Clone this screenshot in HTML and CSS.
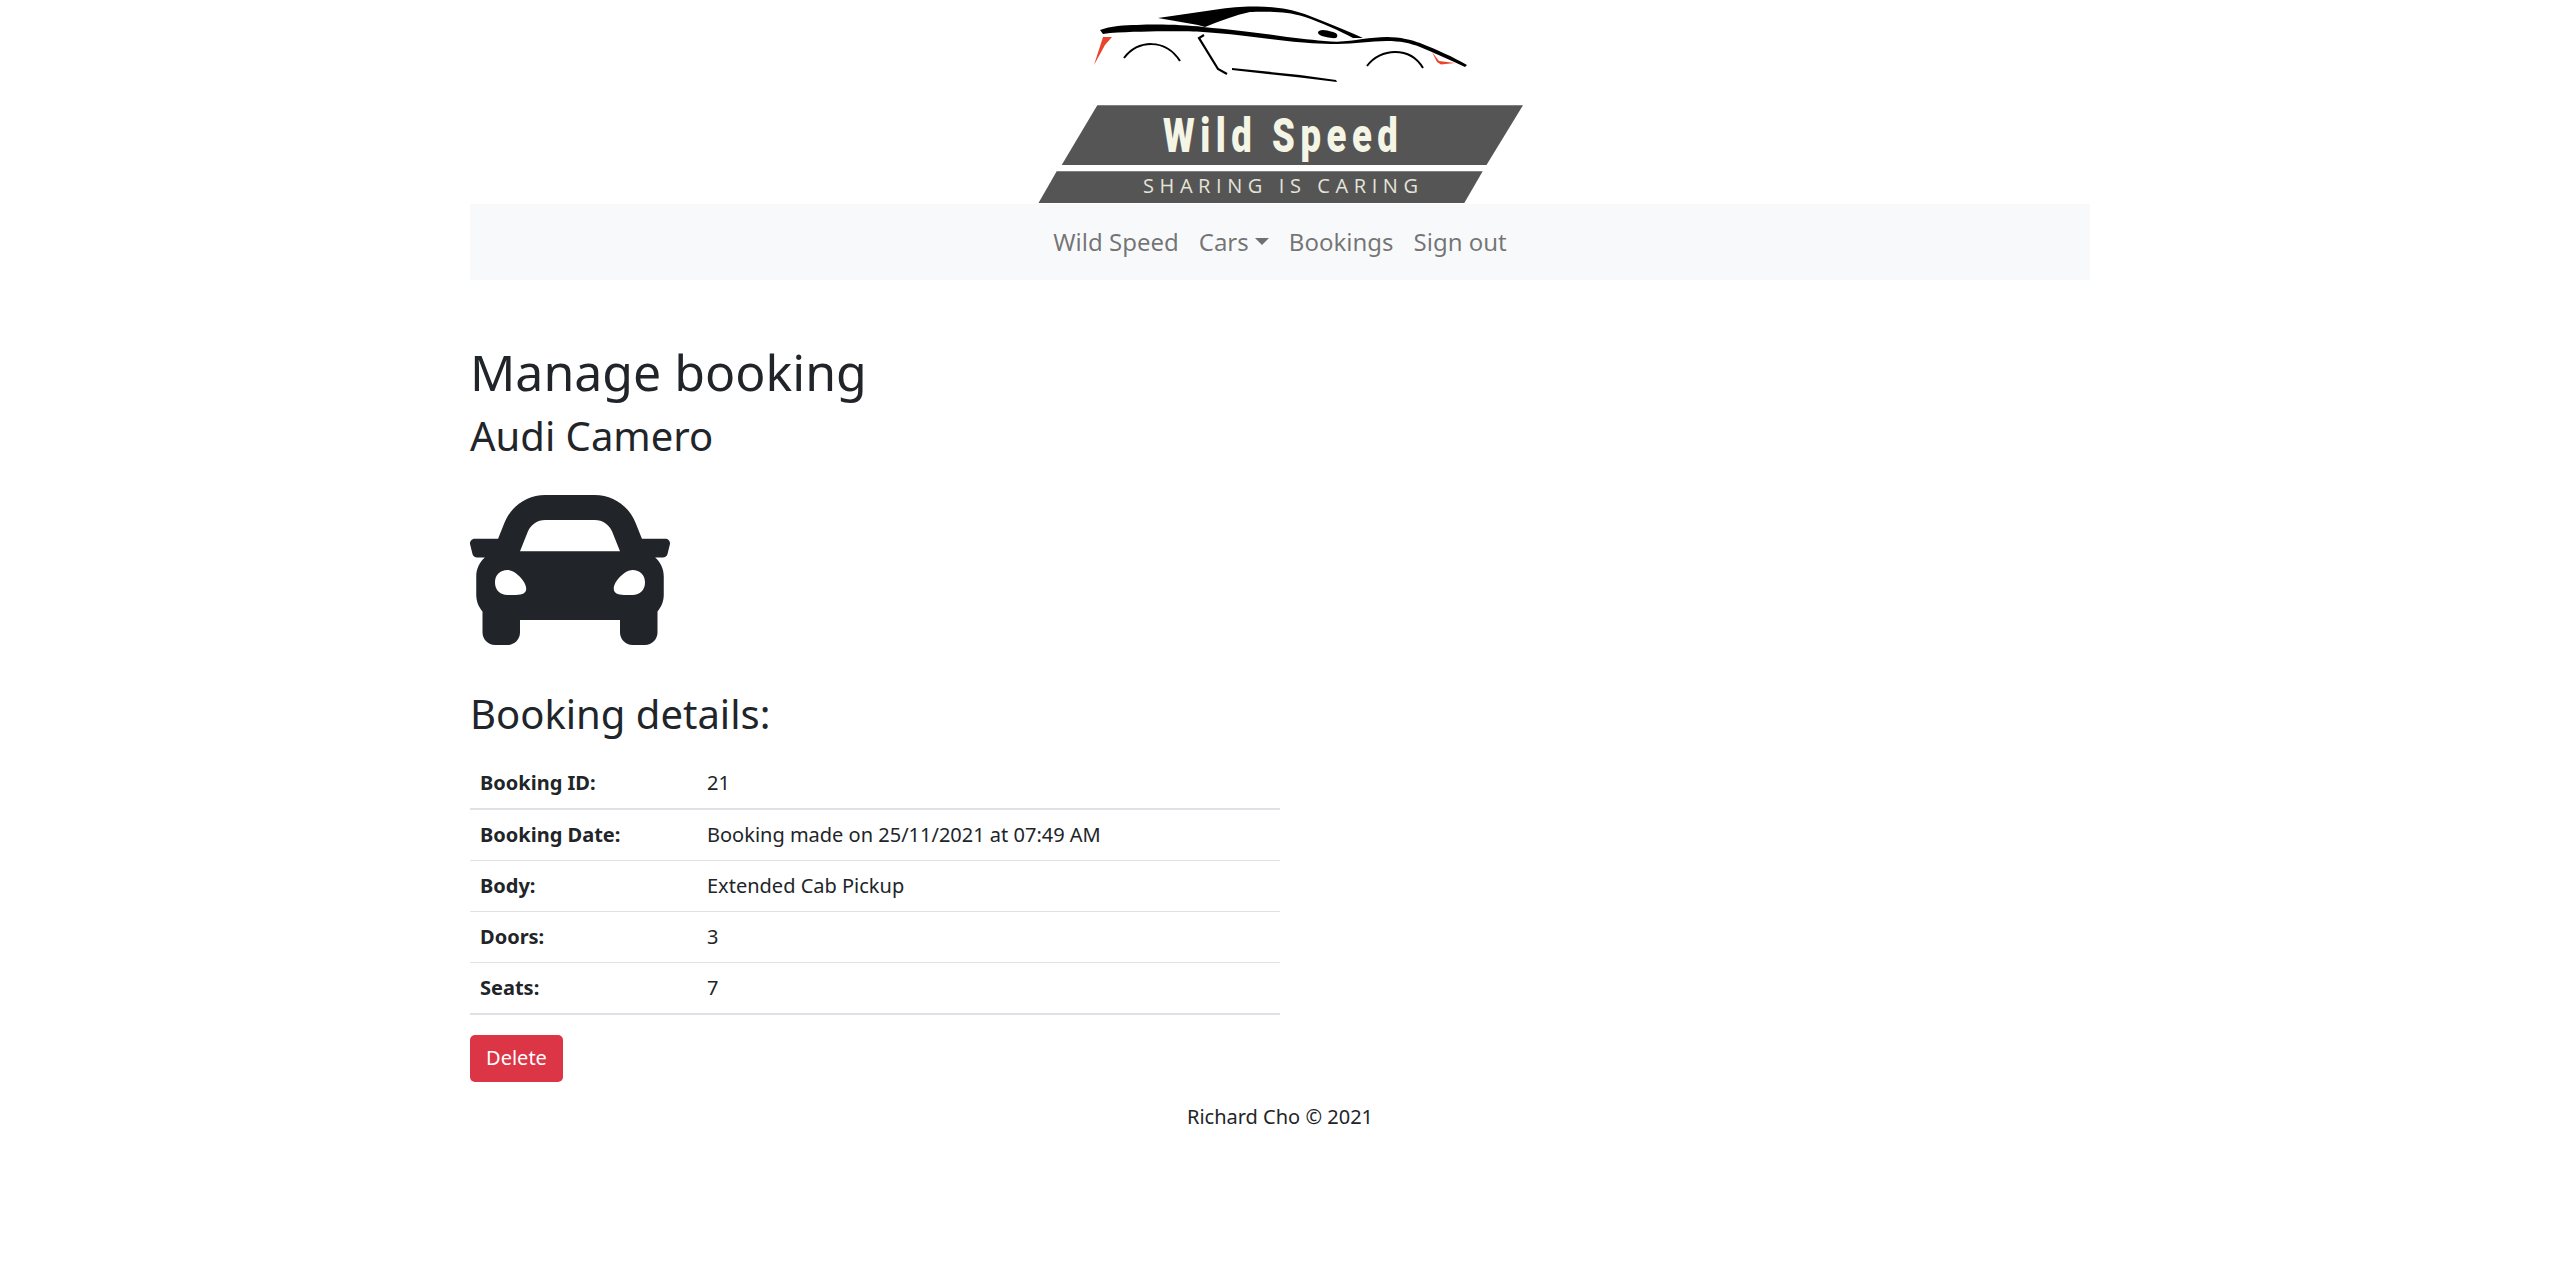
FILE: index.html
```html
<!DOCTYPE html>
<html lang="en">
<head>
  <meta charset="UTF-8">
  <title>Manage booking</title>
  <link rel="stylesheet" href="styles.css">
</head>
<body>
  <header class="logo-wrap">
    <svg class="logo" viewBox="0 0 520 204" width="520" height="204">
      <!-- car outline -->
      <path fill="#000" d="M80 30C90 26 105 25 117 25C140 24 165 25 183 27C215 30 240 33 267 37C285 39 300 41 317 41.7C335 41 350 37 367 37C380 37 392 40 400 43C418 50 433 57 447 65L445 67C430 60 415 53 400 47C390 43 380 41 367 41C350 41 335 44 317 44C300 44 285 43 267 41C240 38 215 34 183 32C165 31 125 31 90 33L83 34Z"/>
      <path fill="#000" d="M138 18L200 9C215 7 225 6.500 237 6.500C247 6.500 258 7.500 267 9.300C280 12 290 16 300 20C315 26 330 32 343 38L333 38C320 31 300 22 285 17C278 15 272 13.500 267 13C255 11.500 240 11.500 230 12C215 15 200 21 185 27L178 25Z"/>
      <path fill="#000" d="M299 31C302 29 306 30 313 32C317 33 318 35 317 37C316 39 311 38 306 37C300 36 296 33 299 31Z"/>
      <path fill="#e8452c" d="M74 65L83 37L92 37L85 45Z"/>
      <path fill="#e8452c" d="M412 52L419 61L435 63L421 64.500L417 62Z"/>
      <path fill="none" stroke="#000" stroke-width="2" d="M104 58C118 40 145 38 160 61"/>
      <path fill="none" stroke="#000" stroke-width="2" d="M347 66C360 48 390 46 403 68"/>
      <path fill="none" stroke="#000" stroke-width="2.200" d="M184 35L179 38L198 69L207 74"/>
      <path fill="#000" d="M212 68L280 75L316 80L317 82L280 77.500L212 70Z"/>
      <!-- banner -->
      <path fill="#555" d="M77.300 105.300H503L466.500 165H41.700Z"/>
      <path fill="#555" d="M36.700 171.300H462.700L444.300 203H18.500Z"/>
      <g transform="translate(143 152) scale(.76 1)">
        <text class="logo-title" textLength="309" lengthAdjust="spacing">Wild Speed</text>
      </g>
      <text class="logo-tag" x="123" y="193" textLength="275">SHARING IS CARING</text>
    </svg>
  </header>

  <div class="container">
    <nav class="navbar">
      <a href="#">Wild Speed</a>
      <a href="#" class="dropdown">Cars</a>
      <a href="#">Bookings</a>
      <a href="#">Sign out</a>
    </nav>

    <main class="content">
      <h1>Manage booking</h1>
      <h2>Audi Camero</h2>
      <svg class="car-icon" viewBox="0 0 512 512" width="200" height="200">
        <path d="M499.99 176h-59.87l-16.64-41.6C406.38 91.63 365.57 64 319.5 64h-127c-46.06 0-86.88 27.63-103.99 70.4L71.87 176H12.01C4.2 176-1.53 183.34.37 190.91l6 24C7.7 220.25 12.5 224 18.01 224h20.07C24.65 235.73 16 252.78 16 272v48c0 16.12 6.16 30.67 16 41.93V416c0 17.67 14.33 32 32 32h32c17.67 0 32-14.33 32-32v-32h256v32c0 17.67 14.33 32 32 32h32c17.67 0 32-14.33 32-32v-54.07c9.84-11.25 16-25.8 16-41.93v-48c0-19.22-8.65-36.27-22.07-48H494c5.51 0 10.31-3.75 11.64-9.09l6-24c1.89-7.57-3.84-14.91-11.65-14.91zm-352.06-17.83c7.29-18.22 24.94-30.17 44.57-30.17h127c19.63 0 37.28 11.95 44.57 30.17L384 208H128l19.93-49.83zM96 319.8c-19.2 0-32-12.76-32-31.9S76.8 256 96 256s48 28.71 48 47.85-28.8 15.95-48 15.95zm320 0c-19.2 0-48 3.19-48-15.95S396.8 256 416 256s32 12.76 32 31.9-12.8 31.9-32 31.9z"/>
      </svg>
      <h2 class="details-title">Booking details:</h2>
      <table class="details">
        <tr><th>Booking ID:</th><td>21</td></tr>
        <tr><th>Booking Date:</th><td>Booking made on 25/11/2021 at 07:49 AM</td></tr>
        <tr><th>Body:</th><td>Extended Cab Pickup</td></tr>
        <tr><th>Doors:</th><td>3</td></tr>
        <tr><th>Seats:</th><td>7</td></tr>
      </table>
      <button class="btn-delete">Delete</button>
    </main>

    <footer class="footer">Richard Cho © 2021</footer>
  </div>
</body>
</html>
```

FILE: styles.css
```css
* {
  box-sizing: border-box;
}

body {
  margin: 0;
  font-family: "Noto Sans", sans-serif;
  font-size: 20px;
  line-height: 30px;
  color: #212529;
  background-color: #fff;
}

.logo-wrap {
  height: 204px;
}

.logo {
  display: block;
  margin: 0 auto;
}

.logo-title {
  font-family: Roboto, sans-serif;
  font-size: 48px;
  font-weight: 900;
  fill: #f5f5e6;
}

.logo-tag {
  font-family: "Open Sans", sans-serif;
  font-size: 20px;
  fill: #e4e4d8;
}

.container {
  width: 1620px;
  margin: 0 auto;
}

.navbar {
  display: flex;
  justify-content: center;
  gap: 20px;
  height: 76px;
  padding-bottom: 1px;
  align-items: center;
  background-color: #f8f9fa;
}

.navbar a {
  color: rgba(0, 0, 0, 0.55);
  text-decoration: none;
  font-size: 24px;
}

.dropdown::after {
  content: "";
  display: inline-block;
  margin-left: 6px;
  vertical-align: 6px;
  border-top: 7px solid;
  border-left: 7px solid transparent;
  border-right: 7px solid transparent;
}

.content {
  padding-top: 62px;
}

h1 {
  margin: 0 0 10px;
  font-size: 50px;
  font-weight: 400;
  line-height: 60px;
}

h2 {
  margin: 0;
  font-size: 40px;
  font-weight: 400;
  line-height: 48px;
}

.car-icon {
  display: block;
  margin-top: 10px;
  fill: #212529;
}

.details-title {
  margin-top: 20px;
}

.details {
  width: 810px;
  margin-top: 20px;
  border-collapse: collapse;
}

.details th,
.details td {
  height: 51px;
  padding: 10px;
  text-align: left;
  border-bottom: 1px solid #dee2e6;
}

.details th {
  width: 227px;
}

.details tr:first-child th,
.details tr:first-child td,
.details tr:last-child th,
.details tr:last-child td {
  border-bottom-width: 2px;
}

.btn-delete {
  display: block;
  width: 93px;
  height: 47px;
  margin-top: 20px;
  padding: 0 0 2px;
  font-family: inherit;
  font-size: 20px;
  color: #fff;
  background-color: #dc3545;
  border: none;
  border-radius: 5px;
}

.footer {
  margin-top: 20px;
  text-align: center;
}
```
